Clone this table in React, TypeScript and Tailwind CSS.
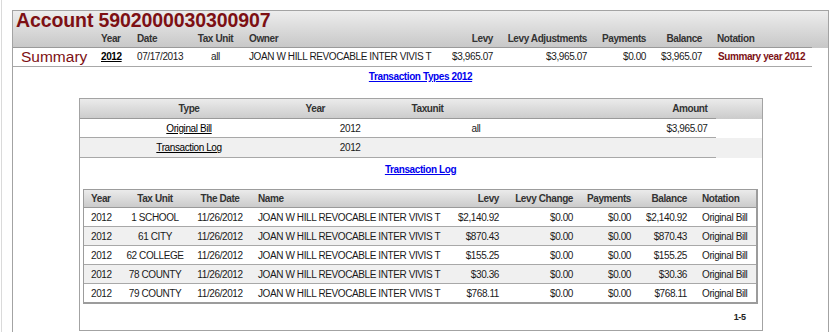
import React from "react";

type LogRow = {
  year: string;
  unit: string;
  date: string;
  name: string;
  levy: string;
  change: string;
  payments: string;
  balance: string;
  notation: string;
};

const OWNER = "JOAN W HILL REVOCABLE INTER VIVIS T";

const logRows: LogRow[] = [
  { year: "2012", unit: "1 SCHOOL", date: "11/26/2012", name: OWNER, levy: "$2,140.92", change: "$0.00", payments: "$0.00", balance: "$2,140.92", notation: "Original Bill" },
  { year: "2012", unit: "61 CITY", date: "11/26/2012", name: OWNER, levy: "$870.43", change: "$0.00", payments: "$0.00", balance: "$870.43", notation: "Original Bill" },
  { year: "2012", unit: "62 COLLEGE", date: "11/26/2012", name: OWNER, levy: "$155.25", change: "$0.00", payments: "$0.00", balance: "$155.25", notation: "Original Bill" },
  { year: "2012", unit: "78 COUNTY", date: "11/26/2012", name: OWNER, levy: "$30.36", change: "$0.00", payments: "$0.00", balance: "$30.36", notation: "Original Bill" },
  { year: "2012", unit: "79 COUNTY", date: "11/26/2012", name: OWNER, levy: "$768.11", change: "$0.00", payments: "$0.00", balance: "$768.11", notation: "Original Bill" },
];

function SummaryPanel() {
  return (
    <div>
      {/* title + column captions share one gradient band */}
      <div className="bg-linear-to-b from-[#ededed] to-[#c7c7c7]">
        <div className="h-[19px] pl-[3px] text-[19.5px] font-bold leading-[19px] tracking-[-0.1px] text-[#7d1014]">
          Account 5902000030300907
        </div>
        <div className="grid w-[799px] grid-cols-[88px_36px_56px_45px_202px_53px_94px_59px_56px_110px] border-b border-[#9a9a9a] pt-px text-[10px] font-bold leading-[16px] text-[#333]">
          <div />
          <div>Year</div>
          <div>Date</div>
          <div className="text-center">Tax Unit</div>
          <div className="pl-[11px]">Owner</div>
          <div className="text-right">Levy</div>
          <div className="text-right">Levy Adjustments</div>
          <div className="text-right">Payments</div>
          <div className="text-right">Balance</div>
          <div className="pl-[15px]">Notation</div>
        </div>
      </div>
      <div className="grid w-[799px] grid-cols-[88px_36px_56px_45px_202px_53px_94px_59px_56px_110px] border-b border-[#a8a8a8] text-[10px] leading-[18px] text-[#1a1a1a]">
        <div className="pl-[8px] text-[15.5px] tracking-normal text-[#7d1014]">Summary</div>
        <div className="font-bold text-black underline">2012</div>
        <div>07/17/2013</div>
        <div className="text-center">all</div>
        <div className="pl-[11px]">{OWNER}</div>
        <div className="text-right">$3,965.07</div>
        <div className="text-right">$3,965.07</div>
        <div className="text-right">$0.00</div>
        <div className="text-right">$3,965.07</div>
        <div className="pl-[16px] font-bold text-[#7d1014]">Summary year 2012</div>
      </div>
    </div>
  );
}

function TypesTable() {
  return (
    <div className="text-[10px]">
      <div className="flex bg-linear-to-b from-[#ebebeb] to-[#cbcbcb] font-bold leading-[18px] text-[#333]">
        <div className="grid w-[636px] grid-cols-[219px_68px_154px_195px] border-b border-[#9a9a9a] pt-px">
          <div className="text-center">Type</div>
          <div className="pl-[7px]">Year</div>
          <div className="pl-[45px]">Taxunit</div>
          <div className="pr-[8px] text-right">Amount</div>
        </div>
      </div>
      <div className="flex bg-white leading-[17px] text-[#1a1a1a]">
        <div className="grid w-[636px] grid-cols-[219px_68px_154px_195px] border-b border-[#a8a8a8] pt-px">
          <div className="text-center"><span className="text-black underline">Original Bill</span></div>
          <div className="pr-[6px] text-right">2012</div>
          <div className="pl-[105px]">all</div>
          <div className="pr-[8px] text-right">$3,965.07</div>
        </div>
      </div>
      <div className="flex bg-[#f0f0f0] leading-[18px] text-[#1a1a1a]">
        <div className="grid w-[636px] grid-cols-[219px_68px_154px_195px] border-b border-[#a8a8a8] pt-px">
          <div className="text-center"><span className="text-black underline">Transaction Log</span></div>
          <div className="pr-[6px] text-right">2012</div>
          <div />
          <div />
        </div>
      </div>
    </div>
  );
}

function LogTable() {
  return (
    <div className="mx-auto w-[675px] border-t border-l border-r-2 border-b-2 border-[#9c9c9c] text-[10px]">
      <div className="grid grid-cols-[36px_70px_60px_200px_53px_74px_58px_56px_65px] border-b border-[#9a9a9a] bg-linear-to-b from-[#ebebeb] to-[#cbcbcb] pt-px font-bold leading-[16px] text-[#333]">
        <div className="pl-[7px]">Year</div>
        <div className="text-center">Tax Unit</div>
        <div className="text-center">The Date</div>
        <div className="pl-[8px]">Name</div>
        <div className="pr-[4px] text-right">Levy</div>
        <div className="pr-[4px] text-right">Levy Change</div>
        <div className="pr-[4px] text-right">Payments</div>
        <div className="pr-[4px] text-right">Balance</div>
        <div className="pl-[11px]">Notation</div>
      </div>
      {logRows.map((r, i) => (
        <div
          key={r.unit}
          className={
            "grid grid-cols-[36px_70px_60px_200px_53px_74px_58px_56px_65px] pt-px leading-[17px] text-[#1a1a1a] " +
            (i % 2 === 1 ? "bg-[#f0f0f0] " : "bg-white ") +
            (i < logRows.length - 1 ? "border-b border-[#a8a8a8]" : "")
          }
        >
          <div className="pl-[7px]">{r.year}</div>
          <div className="text-center">{r.unit}</div>
          <div className="text-center">{r.date}</div>
          <div className="pl-[8px]">{r.name}</div>
          <div className="pr-[4px] text-right">{r.levy}</div>
          <div className="pr-[4px] text-right">{r.change}</div>
          <div className="pr-[4px] text-right">{r.payments}</div>
          <div className="pr-[4px] text-right">{r.balance}</div>
          <div className="pl-[11px]">{r.notation}</div>
        </div>
      ))}
    </div>
  );
}

export default function App() {
  return (
    <div className="h-[332px] w-[838px] overflow-hidden whitespace-nowrap bg-white pl-px font-['Liberation_Sans',Arial,sans-serif] tracking-[-0.4px]">
      <div className="h-full border-l border-[#dadada] pt-[10px] pl-[10px]">
        <div className="h-[340px] w-[817px] border border-[#a3a3a3]">
          <SummaryPanel />
          <div className="mt-[3px] mb-[14px] text-center text-[10px] font-bold leading-[14px]">
            <span className="text-[#0000ee] underline">Transaction Types 2012</span>
          </div>
          <div className="mx-auto w-[684px] border border-[#a3a3a3] pb-[6px]">
            <TypesTable />
            <div className="mt-[5px] mb-[12px] text-center text-[10px] font-bold leading-[14px]">
              <span className="text-[#0000ee] underline">Transaction Log</span>
            </div>
            <LogTable />
            <div className="mt-[6px] pr-[16px] text-right text-[9px] font-bold leading-[14px] text-[#222]">1-5</div>
          </div>
        </div>
      </div>
    </div>
  );
}
